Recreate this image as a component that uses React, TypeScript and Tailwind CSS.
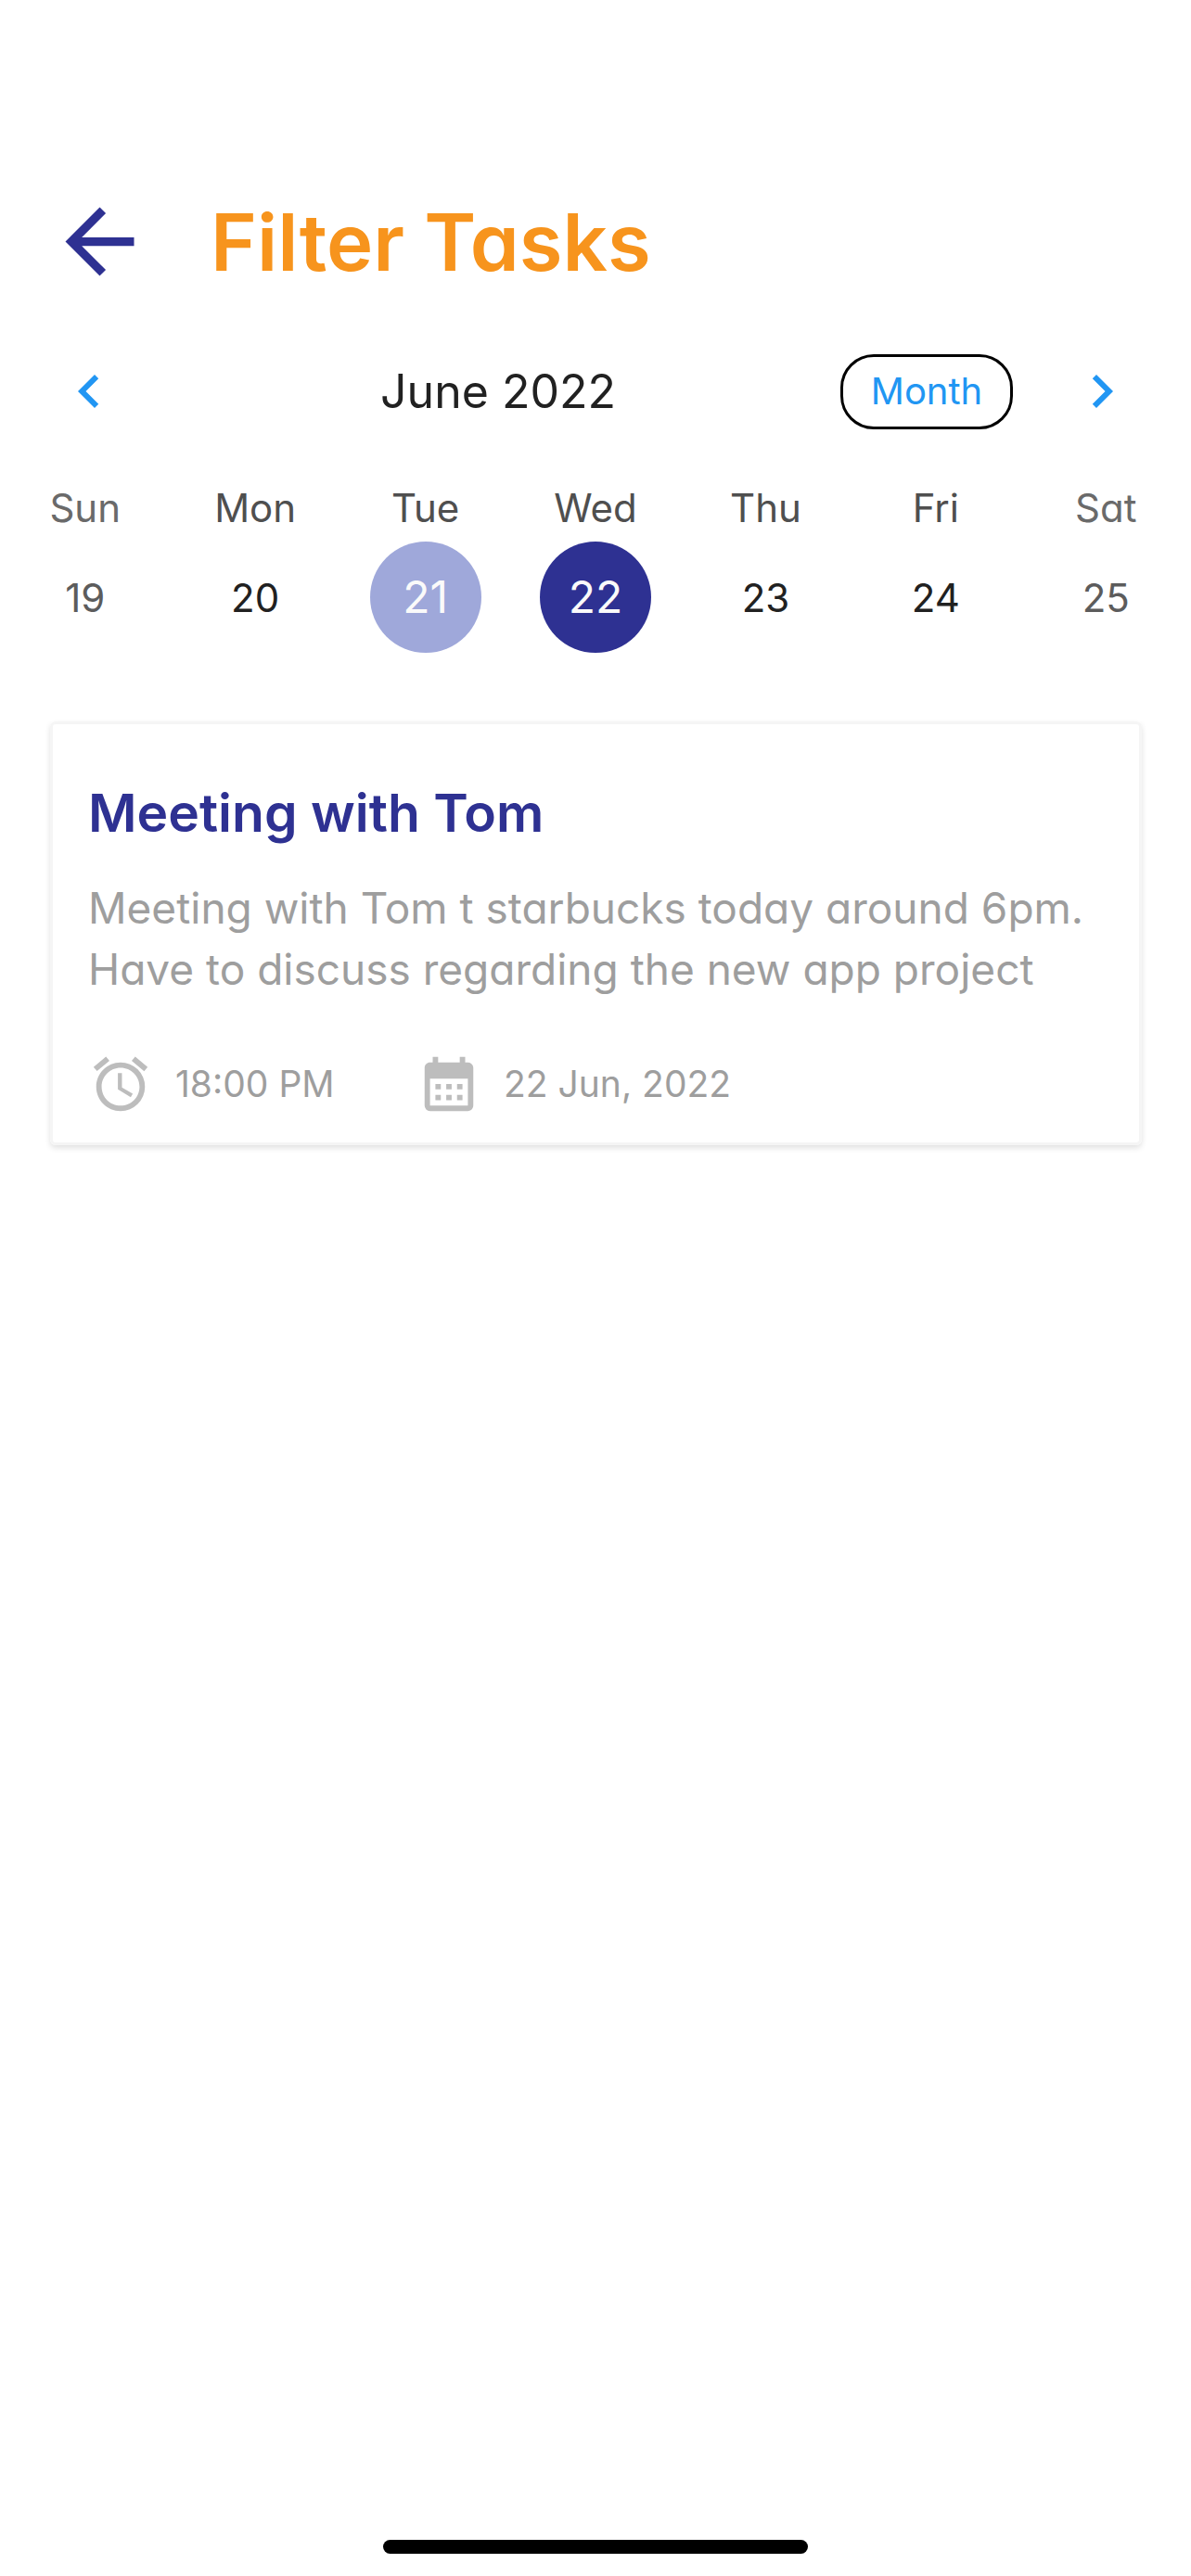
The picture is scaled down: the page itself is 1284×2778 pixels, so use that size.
import React from "react";
import {
  MdAlarm,
  MdArrowBack,
  MdCalendarMonth,
  MdChevronLeft,
  MdChevronRight,
} from "react-icons/md";

type DayState = "weekend" | "plain" | "today" | "selected";

const days: { name: string; date: number; state: DayState }[] = [
  { name: "Sun", date: 19, state: "weekend" },
  { name: "Mon", date: 20, state: "plain" },
  { name: "Tue", date: 21, state: "today" },
  { name: "Wed", date: 22, state: "selected" },
  { name: "Thu", date: 23, state: "plain" },
  { name: "Fri", date: 24, state: "plain" },
  { name: "Sat", date: 25, state: "weekend" },
];

const dateStyles: Record<DayState, string> = {
  weekend: "text-[42px] text-[#5c5c5c]",
  plain: "text-[42px] text-[#212121]",
  today: "bg-[#9fa8da] text-[48px] text-[#fafafa]",
  selected: "bg-[#2e3192] text-[48px] text-[#fafafa]",
};

function Header() {
  return (
    <header className="flex items-center gap-[64px] pl-[52px]">
      <button type="button" aria-label="Back" className="text-[#2e3192]">
        <MdArrowBack className="size-[111px]" />
      </button>
      <h1 className="pt-[4px] text-[85px] leading-[108px] font-semibold text-[#f7941d]">
        Filter Tasks
      </h1>
    </header>
  );
}

function Calendar() {
  return (
    <section aria-label="Calendar" className="mt-[64px]">
      <div className="flex h-[84px] items-center px-[60px] text-[#2196f3]">
        <button type="button" aria-label="Previous week">
          <MdChevronLeft className="size-[72px]" />
        </button>
        <h2 className="flex-1 pl-[36px] text-center text-[50px] leading-[72px] text-[#212121]">
          June 2022
        </h2>
        <button
          type="button"
          className="mr-[60px] h-[81px] w-[186px] rounded-[36px] border-[3px] border-black text-[40px] leading-[48px]"
        >
          Month
        </button>
        <button type="button" aria-label="Next week">
          <MdChevronRight className="size-[72px]" />
        </button>
      </div>
      <ul className="mt-[52px] grid grid-cols-7">
        {days.map((day) => (
          <li key={day.name} className="flex flex-col items-center">
            <span
              className={
                day.state === "weekend"
                  ? "text-[42px] leading-[64px] text-[#6a6a6a]"
                  : "text-[42px] leading-[64px] text-[#4f4f4f]"
              }
            >
              {day.name}
            </span>
            <button
              type="button"
              aria-pressed={day.state === "selected"}
              className={`mt-[4px] size-[120px] rounded-full ${dateStyles[day.state]}`}
            >
              {day.date}
            </button>
          </li>
        ))}
      </ul>
    </section>
  );
}

function TaskCard() {
  return (
    <article className="mr-[53px] ml-[54px] mt-[74px] rounded-[6px] border-[3px] border-[#f5f5f5] px-[38px] pb-[28px] pt-[60px] shadow-[0_3px_6px_rgba(0,0,0,0.12)]">
      <h3 className="text-[57px] leading-[72px] font-semibold text-[#2e3192]">
        Meeting with Tom
      </h3>
      <p className="mt-[33px] text-[46px] leading-[66px] text-[#9e9e9e]">
        Meeting with Tom t starbucks today around 6pm.
        <br />
        Have to discuss regarding the new app project
      </p>
      <div className="mt-[56px] flex items-center text-[39px] leading-[70px] text-[#9e9e9e]">
        <MdAlarm className="size-[70px] text-[#bdbdbd]" />
        <time className="ml-[24px] w-[260px]">18:00 PM</time>
        <MdCalendarMonth className="size-[70px] text-[#bdbdbd]" />
        <time dateTime="2022-06-22" className="ml-[24px]">
          22 Jun, 2022
        </time>
      </div>
    </article>
  );
}

export default function App() {
  return (
    <div className="flex min-h-screen flex-col bg-white pt-[204px] font-[Inter,sans-serif] [font-feature-settings:'cv11']">
      <Header />
      <main>
        <Calendar />
        <TaskCard />
      </main>
      <div className="mx-auto mt-auto mb-[24px] h-[15px] w-[458px] rounded-full bg-black" />
    </div>
  );
}
